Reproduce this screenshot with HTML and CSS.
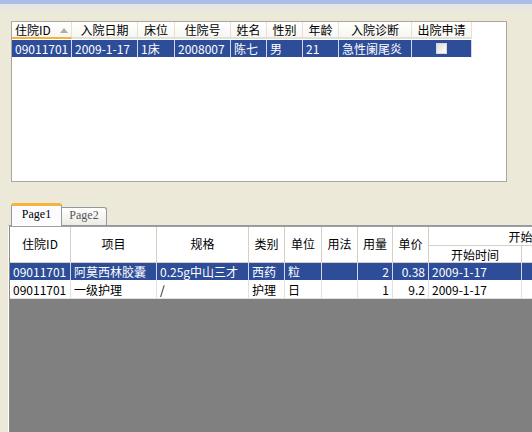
FILE: index.html
```html
<!DOCTYPE html>
<html>
<head>
<meta charset="utf-8">
<link rel="stylesheet" href="styles.css">
</head>
<body>
<div class="topbar"></div>
<div class="page">
  <div class="grid1">
    <div class="g1 g1-head">
      <div class="h sorted"><span>住院ID</span><i class="arrow"></i></div>
      <div class="h">入院日期</div>
      <div class="h">床位</div>
      <div class="h">住院号</div>
      <div class="h">姓名</div>
      <div class="h">性别</div>
      <div class="h">年龄</div>
      <div class="h">入院诊断</div>
      <div class="h">出院申请</div>
    </div>
    <div class="g1 g1-row sel">
      <div class="d">09011701</div>
      <div class="d">2009-1-17</div>
      <div class="d">1床</div>
      <div class="d">2008007</div>
      <div class="d">陈七</div>
      <div class="d">男</div>
      <div class="d">21</div>
      <div class="d">急性阑尾炎</div>
      <div class="d ctr"><span class="chk"></span></div>
    </div>
  </div>

  <div class="tabs">
    <div class="tab active">Page1</div>
    <div class="tab">Page2</div>
  </div>
  <div class="panel">
    <div class="grid2">
      <div class="g2 g2-head">
        <div class="h2 span2">住院ID</div>
        <div class="h2 span2">项目</div>
        <div class="h2 span2">规格</div>
        <div class="h2 span2">类别</div>
        <div class="h2 span2">单位</div>
        <div class="h2 span2">用法</div>
        <div class="h2 span2">用量</div>
        <div class="h2 span2">单价</div>
        <div class="h2 group">开始执行</div>
        <div class="h2 sub">开始时间</div>
        <div class="h2 sub"></div>
      </div>
      <div class="g2 g2-row sel">
        <div class="d">09011701</div>
        <div class="d">阿莫西林胶囊</div>
        <div class="d">0.25g中山三才</div>
        <div class="d">西药</div>
        <div class="d">粒</div>
        <div class="d"></div>
        <div class="d r">2</div>
        <div class="d r">0.38</div>
        <div class="d">2009-1-17</div>
        <div class="d"></div>
      </div>
      <div class="g2 g2-row">
        <div class="d">09011701</div>
        <div class="d">一级护理</div>
        <div class="d">/</div>
        <div class="d">护理</div>
        <div class="d">日</div>
        <div class="d"></div>
        <div class="d r">1</div>
        <div class="d r">9.2</div>
        <div class="d">2009-1-17</div>
        <div class="d"></div>
      </div>
      <div class="empty"></div>
    </div>
  </div>
</div>
</body>
</html>
```
FILE: styles.css
```css
html, body {
  margin: 0;
  padding: 0;
}
body {
  width: 532px;
  height: 432px;
  overflow: hidden;
  background: #ece9d8;
  font-family: "Noto Sans CJK SC", sans-serif;
  font-size: 12px;
  color: #000;
}
.topbar {
  height: 4px;
  background: #a9bde8;
}
.page {
  background: linear-gradient(#e4e5e6 0, #ece9d8 10px);
  padding-top: 17px;
  display: flex;
  flex-direction: column;
}

/* ---------- top grid ---------- */
.grid1 {
  margin-left: 11px;
  width: 494px;
  height: 159px;
  border: 1px solid #aca899;
  background: #fff;
}
.g1 {
  display: grid;
  grid-template-columns: 60px 66px 37px 56px 36px 36px 36px 73px 60px;
}
.g1-head {
  height: 17px;
}
.h {
  box-sizing: border-box;
  height: 17px;
  line-height: 15px;
  text-align: center;
  border-right: 1px solid #e3e1da;
  border-bottom: 2px solid #e2e1d8;
  background: linear-gradient(#ffffff, #f7f6f1);
  white-space: nowrap;
  overflow: hidden;
}
.h.sorted {
  text-align: left;
  padding-left: 3px;
  border-bottom: 2px solid #f6b23a;
  display: flex;
  align-items: center;
  gap: 9px;
}
.arrow {
  width: 0;
  height: 0;
  border-left: 4px solid transparent;
  border-right: 4px solid transparent;
  border-bottom: 5px solid #b0ad9f;
  margin-top: 1px;
}
.g1-row {
  height: 18px;
  border-top: 1px solid #fff;
}
.d {
  box-sizing: border-box;
  height: 18px;
  line-height: 17px;
  padding-left: 3px;
  padding-right: 3px;
  border-right: 1px solid #e4e4e4;
  border-bottom: 1px solid #e4e4e4;
  white-space: nowrap;
  overflow: hidden;
}
.sel .d {
  background: #2e4d98;
  color: #fff;
  border-right-color: #d2d8e8;
  border-bottom-color: #fff;
}
.d.ctr {
  display: flex;
  align-items: center;
  justify-content: center;
}
.d.r {
  text-align: right;
}
.chk {
  width: 11px;
  height: 11px;
  box-sizing: border-box;
  border: 1px solid #d8d8d8;
  background: linear-gradient(135deg, #dcdcd8, #ffffff);
}

/* ---------- tabs ---------- */
.tabs {
  margin-top: 21px;
  margin-left: 11px;
  display: flex;
  align-items: flex-end;
  height: 22px;
  font-family: "Liberation Serif", serif;
  font-size: 12px;
}
.tab {
  box-sizing: border-box;
  width: 45px;
  height: 18px;
  line-height: 15px;
  text-align: center;
  border: 1px solid #919b9c;
  border-bottom: none;
  border-left: none;
  border-radius: 0 3px 0 0;
  background: linear-gradient(#ffffff, #ecebe5);
  color: #555;
}
.tab.active {
  width: 51px;
  height: 23px;
  margin-bottom: -1px;
  position: relative;
  z-index: 1;
  border-left: 1px solid #919b9c;
  border-top: 3px solid #f5b43a;
  border-radius: 3px 3px 0 0;
  background: #fcfcfe;
  color: #000;
  line-height: 16px;
}

/* ---------- panel / bottom grid ---------- */
.panel {
  margin-left: 8px;
  border-top: 1px solid #919b9c;
  border-left: 1px solid #fcfcfe;
  height: 210px;
}
.grid2 {
  border-top: 1px solid #a0a0a0;
  border-left: 1px solid #8a8a8a;
  height: 209px;
  display: flex;
  flex-direction: column;
  background: #808080;
  width: 700px;
}
.g2 {
  display: grid;
  grid-template-columns: 61px 86px 92px 36px 37px 36px 35px 36px 93px 115px;
}
.g2-head {
  grid-template-rows: 19px 17px;
  background: #fff;
}
.h2 {
  box-sizing: border-box;
  border-right: 1px solid #d4d0c8;
  border-bottom: 1px solid #d4d0c8;
  display: flex;
  align-items: center;
  justify-content: center;
  white-space: nowrap;
  background: #fff;
}
.h2.span2 {
  grid-row: span 2;
  padding-bottom: 2px;
}
.h2.group {
  grid-column: span 2;
  border-bottom-color: #d4d0c8;
}
.g2-row {
  height: 18px;
  background: #fff;
}
.g2-row .d {
  border-right-color: #e0e0e0;
  border-bottom-color: #e0e0e0;
}
.g2-row.sel .d {
  border-right-color: #d2d8e8;
  border-bottom-color: #fff;
}
.empty {
  flex: 1;
  background: #808080;
}
```
